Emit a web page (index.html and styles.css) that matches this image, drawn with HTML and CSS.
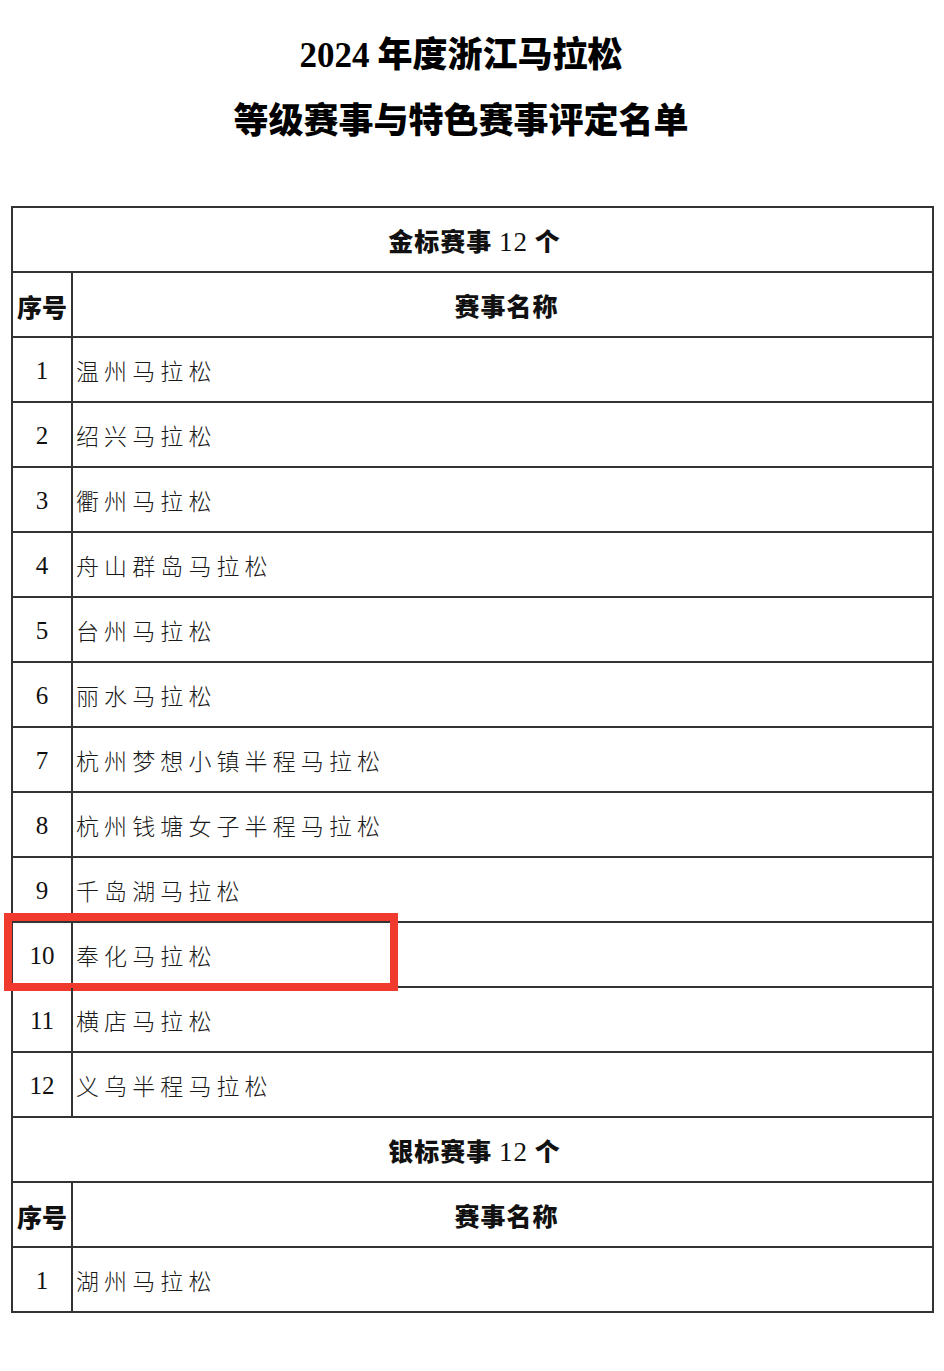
FILE: index.html
```html
<!DOCTYPE html>
<html lang="zh-CN">
<head>
<meta charset="utf-8">
<title>2024年度浙江马拉松等级赛事与特色赛事评定名单</title>
<link rel="stylesheet" href="styles.css">
</head>
<body>
<div class="page">
  <header class="title">
    <div class="t1"><span class="num">2024</span> 年度浙江马拉松</div>
    <div class="t2">等级赛事与特色赛事评定名单</div>
  </header>
  <div class="sheet">
    <div class="row section"><span class="cap">金标赛事 <span class="num">12</span> 个</span></div>
    <div class="row head"><div class="c1">序号</div><div class="c2">赛事名称</div></div>
    <div class="row"><div class="c1">1</div><div class="c2">温州马拉松</div></div>
    <div class="row"><div class="c1">2</div><div class="c2">绍兴马拉松</div></div>
    <div class="row"><div class="c1">3</div><div class="c2">衢州马拉松</div></div>
    <div class="row"><div class="c1">4</div><div class="c2">舟山群岛马拉松</div></div>
    <div class="row"><div class="c1">5</div><div class="c2">台州马拉松</div></div>
    <div class="row"><div class="c1">6</div><div class="c2">丽水马拉松</div></div>
    <div class="row"><div class="c1">7</div><div class="c2">杭州梦想小镇半程马拉松</div></div>
    <div class="row"><div class="c1">8</div><div class="c2">杭州钱塘女子半程马拉松</div></div>
    <div class="row"><div class="c1">9</div><div class="c2">千岛湖马拉松</div></div>
    <div class="row mark"><div class="c1">10</div><div class="c2">奉化马拉松</div><div class="hl"></div></div>
    <div class="row"><div class="c1">11</div><div class="c2">横店马拉松</div></div>
    <div class="row"><div class="c1">12</div><div class="c2">义乌半程马拉松</div></div>
    <div class="row section"><span class="cap">银标赛事 <span class="num">12</span> 个</span></div>
    <div class="row head"><div class="c1">序号</div><div class="c2">赛事名称</div></div>
    <div class="row"><div class="c1">1</div><div class="c2">湖州马拉松</div></div>
  </div>
</div>
</body>
</html>
```

FILE: styles.css
```css
* { box-sizing: border-box; }
html, body { margin: 0; padding: 0; background: #fff; }
body {
  width: 944px;
  height: 1371px;
  overflow: hidden;
  color: #111;
  font-family: "Noto Sans CJK SC", sans-serif;
}
.page { padding-top: 21px; }
.title {
  text-align: center;
  font-weight: 900;
  font-size: 35px;
  line-height: 62px;
  color: #000;
  padding-right: 22px;
}
.num { font-family: "Liberation Serif", serif; font-weight: 700; }
.sheet {
  margin: 57px 0 0 11px;
  width: 923px;
  border-top: 2px solid #333;
  border-left: 2px solid #333;
  border-right: 2px solid #333;
}
.row {
  position: relative;
  display: flex;
  height: 65px;
  border-bottom: 2px solid #333;
}
.c1 {
  width: 60px;
  flex: none;
  border-right: 2px solid #333;
  display: flex;
  align-items: center;
  justify-content: center;
  font-family: "Liberation Serif", serif;
  font-size: 25px;
  padding-top: 2px;
}
.c2 {
  flex: 1;
  display: flex;
  align-items: center;
  padding-left: 3px;
  font-size: 23px;
  font-weight: 300;
  letter-spacing: 5.1px;
  color: #1a1a1a;
  padding-top: 1px;
}
.section {
  justify-content: center;
  align-items: center;
}
.cap {
  font-size: 25px;
  font-weight: 900;
  letter-spacing: 1px;
  margin-left: 4px;
}
.cap .num { font-weight: 400; font-size: 27px; }
.head .c1 {
  font-family: "Noto Sans CJK SC", sans-serif;
  font-weight: 900;
  font-size: 25px;
  letter-spacing: 0;
}
.head .c2 {
  justify-content: center;
  font-weight: 900;
  font-size: 25px;
  letter-spacing: 1px;
  color: #111;
  padding-left: 8px;
}
.hl {
  position: absolute;
  left: -9px;
  top: -10px;
  width: 394px;
  height: 78px;
  border: 8px solid #f03a2e;
  pointer-events: none;
}
```
